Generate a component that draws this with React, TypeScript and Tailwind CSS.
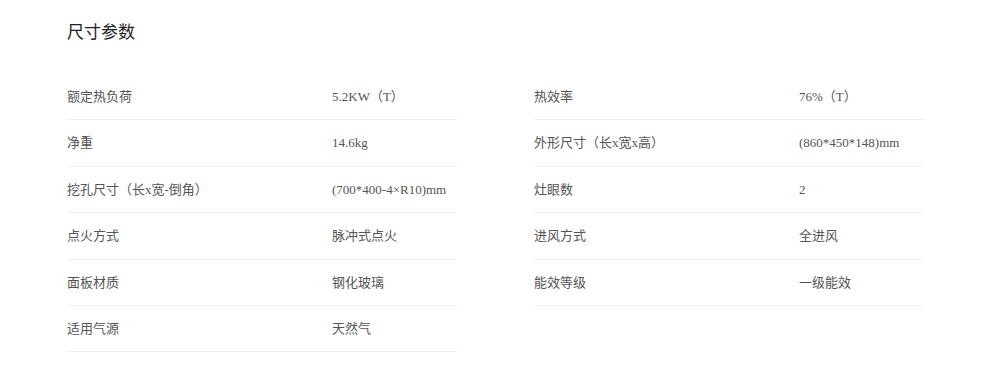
const left: [string, string][] = [
  ["额定热负荷", "5.2KW（T）"],
  ["净重", "14.6kg"],
  ["挖孔尺寸（长x宽-倒角）", "(700*400-4×R10)mm"],
  ["点火方式", "脉冲式点火"],
  ["面板材质", "钢化玻璃"],
  ["适用气源", "天然气"],
];

const right: [string, string][] = [
  ["热效率", "76%（T）"],
  ["外形尺寸（长x宽x高）", "(860*450*148)mm"],
  ["灶眼数", "2"],
  ["进风方式", "全进风"],
  ["能效等级", "一级能效"],
];

function SpecColumn({ rows }: { rows: [string, string][] }) {
  return (
    <div className="flex flex-col">
      {rows.map(([label, value]) => (
        <div
          key={label}
          className="flex items-center h-[46.4px] border-b border-[#f0f0f0] text-[13px] text-[#555]"
        >
          <span className="w-[265px] shrink-0">{label}</span>
          <span>{value}</span>
        </div>
      ))}
    </div>
  );
}

export default function App() {
  return (
    <div
      className="w-[1000px] h-[379px] bg-white pl-[67px] pt-[20px]"
      style={{ fontFamily: '"Liberation Serif", "Noto Sans CJK SC", serif' }}
    >
      {/* Title */}
      <h2 className="text-[17px] leading-[25px] text-[#222]">尺寸参数</h2>

      {/* Spec table */}
      <div className="grid grid-cols-[390px_390px] gap-x-[77px] mt-[29px]">
        <SpecColumn rows={left} />
        <SpecColumn rows={right} />
      </div>
    </div>
  );
}
